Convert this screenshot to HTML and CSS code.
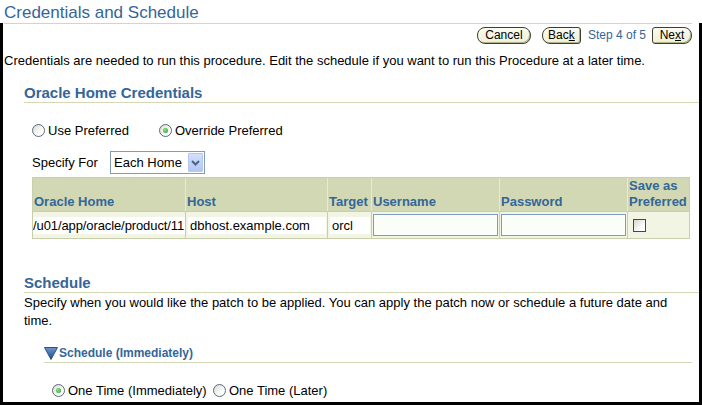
FILE: index.html
```html
<!DOCTYPE html>
<html>
<head>
<meta charset="utf-8">
<title>Credentials and Schedule</title>
<link rel="stylesheet" href="styles.css">
</head>
<body>
<div class="page">
  <header class="top">
    <h1 class="title">Credentials and Schedule</h1>
  </header>
  <div class="frame">
    <div class="rule"></div>
    <div class="nav">
      <button class="btn btn-cancel">Cancel</button>
      <button class="btn btn-back">Bac<u>k</u></button>
      <span class="step">Step 4 of 5</span>
      <button class="btn btn-next">Ne<u>x</u>t</button>
    </div>
    <p class="intro">Credentials are needed to run this procedure. Edit the schedule if you want to run this Procedure at a later time.</p>

    <section class="sub">
      <h2 class="sub-title">Oracle Home Credentials</h2>
      <div class="sub-body">
        <div class="radio-row cred-radios">
          <label class="opt opt-use"><span class="radio"></span>Use Preferred</label>
          <label class="opt"><span class="radio on"></span>Override Preferred</label>
        </div>
        <div class="specify">
          <span class="specify-label">Specify For</span>
          <div class="select">
            <span class="select-text">Each Home</span>
            <span class="select-btn"><svg width="9" height="6" viewBox="0 0 9 6"><polyline points="1,1 4.5,4.5 8,1" fill="none" stroke="#4d6185" stroke-width="2"/></svg></span>
          </div>
        </div>
        <table class="grid">
          <colgroup>
            <col class="c-home"><col class="c-host"><col class="c-target"><col class="c-user"><col class="c-pass"><col class="c-save">
          </colgroup>
          <thead>
            <tr>
              <th>Oracle Home</th>
              <th>Host</th>
              <th>Target</th>
              <th>Username</th>
              <th>Password</th>
              <th>Save as Preferred</th>
            </tr>
          </thead>
          <tbody>
            <tr>
              <td class="ro-cell first"><span class="ro">/u01/app/oracle/product/11</span></td>
              <td class="ro-cell"><span class="ro">dbhost.example.com</span></td>
              <td class="ro-cell"><span class="ro">orcl</span></td>
              <td class="in-cell"><span class="field"></span></td>
              <td class="in-cell"><span class="field"></span></td>
              <td class="chk-cell"><span class="check"></span></td>
            </tr>
          </tbody>
        </table>
      </div>
    </section>

    <section class="sub sched">
      <h2 class="sub-title">Schedule</h2>
      <p class="sched-text">Specify when you would like the patch to be applied. You can apply the patch now or schedule a future date and time.</p>
      <div class="disclose">
        <h3 class="disclose-title"><svg class="tri" width="14" height="13" viewBox="0 0 14 13"><defs><linearGradient id="tg" x1="0" y1="0" x2="0" y2="1"><stop offset="0" stop-color="#6f97cc"/><stop offset="1" stop-color="#1d4a86"/></linearGradient></defs><polygon points="0.5,0.5 13.5,0.5 7,12.5" fill="url(#tg)" stroke="#24538f" stroke-width="1"/></svg>Schedule (Immediately)</h3>
        <div class="radio-row sched-radios">
          <label class="opt opt-now"><span class="radio on"></span>One Time (Immediately)</label>
          <label class="opt"><span class="radio"></span>One Time (Later)</label>
        </div>
      </div>
    </section>
  </div>
</div>
</body>
</html>
```

FILE: styles.css
```css
* { box-sizing: border-box; }
html, body { margin: 0; padding: 0; }
body {
  background: #ffffff;
  font-family: "Liberation Sans", Arial, sans-serif;
  font-size: 13px;
  color: #000;
}
.page {
  width: 702px;
  height: 405px;
  display: flex;
  flex-direction: column;
}
.top {
  height: 23px;
  padding: 3px 0 0 4px;
}
.title {
  margin: 0;
  font-size: 17px;
  font-weight: normal;
  line-height: 20px;
  color: #336699;
}
.frame {
  flex: 1;
  min-height: 0;
  border: 3px solid #000;
  border-top: 0;
  overflow: hidden;
}
.rule {
  height: 1px;
  background: #d3d8b6;
  margin: 0 7px 0 1px;
}
.nav {
  display: flex;
  justify-content: flex-end;
  align-items: center;
  height: 17px;
  margin: 3px 7px 0 0;
}
.btn {
  height: 17px;
  padding: 0;
  font-family: "Liberation Sans", Arial, sans-serif;
  font-size: 12px;
  line-height: 15px;
  color: #000;
  border: 1px solid #3f3f30;
  background: linear-gradient(#fbfbf0, #efefd8);
  box-shadow: inset -1px -1px 0 #b3b38c;
}
.btn u { text-decoration: underline; }
.btn-cancel { width: 54px; border-radius: 8px; margin-right: 11px; }
.btn-back { width: 39px; border-radius: 8px 3px 3px 8px; }
.btn-next { width: 40px; border-radius: 3px 8px 8px 3px; }
.step {
  margin: 0 6px 0 7px;
  color: #336699;
  font-size: 12px;
  line-height: 15px;
}
.intro {
  margin: 9px 0 0 1px;
  line-height: 15px;
}
.sub {
  margin: 16px 0 0 21px;
}
.sub-title {
  margin: 0;
  font-size: 15px;
  font-weight: bold;
  line-height: 17px;
  color: #336699;
  padding-bottom: 1px;
  border-bottom: 1px solid #d3d8b6;
}
.sub-body {
  padding-left: 8px;
}
.radio-row {
  display: flex;
  align-items: center;
  height: 15px;
}
.cred-radios { margin-top: 20px; }
.opt {
  display: flex;
  align-items: center;
  line-height: 15px;
  white-space: nowrap;
}
.opt-use { width: 127px; }
.opt-now { width: 161px; }
.radio {
  position: relative;
  flex: none;
  width: 13px;
  height: 13px;
  margin-right: 3px;
  border-radius: 50%;
  border: 1px solid #5a6a7b;
  background: linear-gradient(135deg, #d9d9d3, #ffffff 70%);
}
.radio.on::after {
  content: "";
  position: absolute;
  left: 3px;
  top: 3px;
  width: 5px;
  height: 5px;
  border-radius: 50%;
  background: radial-gradient(circle at 40% 40%, #8be68b, #1e9a1e);
}
.specify {
  display: flex;
  align-items: center;
  margin-top: 13px;
}
.specify-label {
  width: 78px;
  line-height: 15px;
}
.select {
  display: flex;
  align-items: stretch;
  width: 95px;
  height: 23px;
  padding: 1px;
  border: 1px solid #7f9db9;
  background: #fff;
}
.select-text {
  padding-left: 2px;
  line-height: 19px;
}
.select-btn {
  margin-left: auto;
  width: 15px;
  display: flex;
  align-items: center;
  justify-content: center;
  border: 1px solid #b5c7f1;
  border-radius: 1px;
  background: linear-gradient(#d3e0fd, #b2c6f4);
}
.grid {
  margin-top: 3px;
  width: 658px;
  table-layout: fixed;
  border-collapse: separate;
  border-spacing: 0;
  border: 1px solid #c8cfaa;
}
.c-home { width: 153px; }
.c-host { width: 142px; }
.c-target { width: 44px; }
.c-user { width: 128px; }
.c-pass { width: 128px; }
.c-save { width: 61px; }
.grid th {
  height: 33px;
  padding: 0 1px 1px 1px;
  background: #d1d8b3;
  color: #336699;
  font-size: 13px;
  font-weight: bold;
  line-height: 16px;
  text-align: left;
  vertical-align: bottom;
  border-right: 1px solid #e7ebd6;
}
.grid th:last-child { border-right: 0; }
.grid td {
  height: 27px;
  padding: 0;
  background: #f2f4e4;
  vertical-align: middle;
  border-top: 1px solid #c8cfaa;
  border-right: 1px solid #c8cfaa;
}
.grid td:last-child { border-right: 0; }
.grid td.ro-cell { padding: 0 1px 0 2px; }
.grid td.ro-cell.first { padding: 0; }
.ro {
  display: block;
  height: 17px;
  padding-left: 2px;
  line-height: 17px;
  background: #fff;
  white-space: nowrap;
  overflow: hidden;
}
.first .ro { padding-left: 0; letter-spacing: -0.1px; }
.grid td.in-cell { padding: 0 0 0 1px; }
.field {
  display: block;
  width: 125px;
  height: 22px;
  border: 1px solid #7f9db9;
  background: #fbfdf9;
}
.grid td.chk-cell { padding-left: 5px; }
.check {
  display: block;
  width: 13px;
  height: 13px;
  border: 1px solid #1c5180;
  background: linear-gradient(135deg, #d6d6cf, #ffffff 75%);
}
.sched { margin-top: 35px; }
.sched-text {
  margin: 1px 0 0 0;
  padding-right: 22px;
  line-height: 18px;
}
.disclose {
  margin: 16px 7px 0 20px;
}
.disclose-title {
  margin: 0;
  display: flex;
  align-items: flex-start;
  font-size: 12px;
  font-weight: bold;
  line-height: 14px;
  color: #336699;
  padding-bottom: 2px;
  border-bottom: 1px solid #d3d8b6;
}
.tri {
  display: block;
  flex: none;
  margin: 1px 1px 0 0;
}
.sched-radios {
  margin-top: 20px;
  padding-left: 8px;
}
```
